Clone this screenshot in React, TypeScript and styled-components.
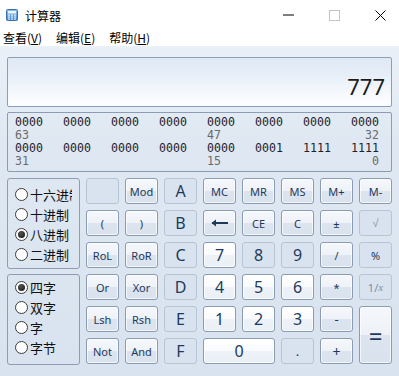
import React from 'react'
import styled, { createGlobalStyle, css } from 'styled-components'

const GlobalStyle = createGlobalStyle`
  html, body {
    margin: 0;
    padding: 0;
    background: #fff;
  }
  body {
    font-family: 'Noto Sans', 'Noto Sans CJK SC', sans-serif;
  }
`

const Window = styled.div`
  width: 399px;
  height: 376px;
  display: flex;
  flex-direction: column;
  overflow: hidden;
  background: #fff;
`

const TitleBar = styled.div`
  height: 30px;
  flex: none;
  display: flex;
  align-items: center;
  padding-left: 6px;
`

const Title = styled.span`
  margin-left: 7px;
  font-size: 12px;
  color: #000;
  font-family: 'Noto Sans CJK SC', sans-serif;
`

const Controls = styled.div`
  margin-left: auto;
  margin-right: -4px;
  display: flex;
  height: 100%;
`

const Ctrl = styled.div`
  width: 46px;
  display: flex;
  align-items: center;
  justify-content: center;
`

const MenuBar = styled.div`
  height: 16px;
  flex: none;
  display: flex;
  align-items: center;
  padding-left: 3px;
  font-family: 'Noto Sans CJK SC', sans-serif;
  font-size: 12px;
  color: #000;
  span {
    margin-right: 14px;
    line-height: 16px;
  }
`

const Body = styled.div`
  flex: 1;
  padding: 11px 7px 0;
  background: linear-gradient(#eaf0f8 0%, #dfe8f2 30%, #d8e3ef 100%);
`

const Display = styled.div`
  height: 50px;
  box-sizing: border-box;
  border: 1px solid #8d9db4;
  border-radius: 2px;
  background: linear-gradient(#dfe8f4 0%, #e7eef8 35%, #f6f9fd 75%, #fdfeff 100%);
  display: flex;
  align-items: flex-end;
  justify-content: flex-end;
  padding: 0 6px 9px 0;
  font-size: 22px;
  line-height: 22px;
  color: #1b1b1b;
`

const BitPanel = styled.div`
  margin-top: 5px;
  height: 60px;
  box-sizing: border-box;
  border: 1px solid #8c9cb2;
  border-radius: 2px;
  padding: 3px 0 0 7px;
  font-family: 'DejaVu Sans Mono', monospace;
  font-size: 11.6px;
`

const BitRow = styled.div<{ $label?: boolean }>`
  display: grid;
  grid-template-columns: repeat(8, 28px);
  column-gap: 20px;
  height: 13px;
  line-height: 13px;
  color: ${p => (p.$label ? '#6a6a6a' : '#1f2329')};
`

const BitLabel = styled.span<{ $col: number; $end?: boolean }>`
  grid-column: ${p => p.$col};
  justify-self: ${p => (p.$end ? 'end' : 'start')};
`

const Pad = styled.div`
  margin-top: 6px;
  display: grid;
  grid-template-columns: 73px repeat(8, 33px);
  grid-template-rows: repeat(6, 26px);
  gap: 6px;
`

const RadioGroup = styled.div<{ $pad: number; $row: number }>`
  grid-column: 1;
  grid-row: ${p => p.$row} / span 3;
  height: 91px;
  box-sizing: border-box;
  border: 1px solid #8e9db3;
  border-radius: 3px;
  padding: ${p => p.$pad}px 7px 0 7px;
  display: flex;
  flex-direction: column;
`

const RadioItem = styled.div`
  height: 20px;
  display: flex;
  align-items: center;
  font-family: 'Noto Sans CJK SC', sans-serif;
  font-size: 13px;
  color: #111;
  white-space: nowrap;
  overflow: hidden;
`

const Dot = styled.span<{ $on?: boolean }>`
  flex: none;
  width: 13px;
  height: 13px;
  box-sizing: border-box;
  border-radius: 50%;
  border: 1px solid #3c3c3c;
  background: #fff;
  margin-right: 2px;
  display: flex;
  align-items: center;
  justify-content: center;
  ${p =>
    p.$on &&
    css`
      &::after {
        content: '';
        width: 7px;
        height: 7px;
        border-radius: 50%;
        background: radial-gradient(circle at 40% 35%, #555, #111);
      }
    `}
`

type Kind = 'op' | 'num' | 'off'

const Key = styled.div<{ $kind: Kind; $size?: number; $wide?: boolean; $tall?: boolean; $dim?: boolean }>`
  box-sizing: border-box;
  border-radius: 3px;
  display: flex;
  align-items: center;
  justify-content: center;
  font-size: ${p => p.$size ?? 11}px;
  color: ${p => (p.$dim ? '#7d8da3' : '#1e395b')};
  user-select: none;
  ${p => p.$wide && 'grid-column: span 2;'}
  ${p => p.$tall && 'grid-row: span 2;'}
  ${p =>
    p.$kind === 'op'
      ? css`
          border: 1px solid #8a9bb3;
          background: linear-gradient(#f4f7fb 0%, #eef2f8 50%, #dbe4ef 50%, #d9e2ed 100%);
          box-shadow: inset 0 0 0 1px rgba(255, 255, 255, 0.7);
        `
      : p.$kind === 'num'
      ? css`
          border: 1px solid #8a9bb3;
          background: linear-gradient(#ffffff 0%, #f8fafd 50%, #edf2f8 50%, #eaf0f6 100%);
          box-shadow: inset 0 0 0 1px rgba(255, 255, 255, 0.8);
        `
      : css`
          border: 1px solid #b6c4d5;
          background: #d9e3ef;
        `}
`

const CalcIcon = () => (
  <svg width='12' height='12' viewBox='0 0 12 12'>
    <defs>
      <linearGradient id='ci' x1='0' y1='0' x2='0' y2='1'>
        <stop offset='0' stopColor='#8fc3ee' />
        <stop offset='1' stopColor='#3d86cf' />
      </linearGradient>
    </defs>
    <rect x='0.5' y='0.5' width='11' height='11' rx='1' fill='url(#ci)' stroke='#3b6fa8' />
    <rect x='2' y='2' width='8' height='2.5' fill='#eaf5ff' />
    {[0, 1, 2].map(r =>
      [0, 1, 2].map(c => (
        <rect key={`${r}${c}`} x={2 + c * 3} y={5.5 + r * 2} width='2' height='1.2' fill='#e3f0fb' />
      ))
    )}
  </svg>
)

const BackArrow = () => (
  <svg width='18' height='8' viewBox='0 0 18 8'>
    <path d='M1 4 H17' stroke='#1e395b' strokeWidth='2' />
    <path d='M0.5 4 L5 0.5 V7.5 Z' fill='#1e395b' />
  </svg>
)

type K = { t: React.ReactNode; k: Kind; s?: number; wide?: boolean; tall?: boolean; dim?: boolean }

const keys: K[] = [
  { t: '', k: 'off' },
  { t: 'Mod', k: 'op' },
  { t: 'A', k: 'off', s: 16 },
  { t: 'MC', k: 'op' },
  { t: 'MR', k: 'op' },
  { t: 'MS', k: 'op' },
  { t: 'M+', k: 'op' },
  { t: 'M-', k: 'op' },

  { t: '(', k: 'op' },
  { t: ')', k: 'op' },
  { t: 'B', k: 'off', s: 16 },
  { t: <BackArrow />, k: 'op' },
  { t: 'CE', k: 'op' },
  { t: 'C', k: 'op' },
  { t: '±', k: 'op' },
  { t: <span style={{ fontFamily: 'Liberation Sans, sans-serif' }}>√</span>, k: 'off', dim: true },

  { t: 'RoL', k: 'op' },
  { t: 'RoR', k: 'op' },
  { t: 'C', k: 'off', s: 16 },
  { t: '7', k: 'num', s: 16 },
  { t: '8', k: 'off', s: 16 },
  { t: '9', k: 'off', s: 16 },
  { t: '/', k: 'op' },
  { t: '%', k: 'off' },

  { t: 'Or', k: 'op' },
  { t: 'Xor', k: 'op' },
  { t: 'D', k: 'off', s: 16 },
  { t: '4', k: 'num', s: 16 },
  { t: '5', k: 'num', s: 16 },
  { t: '6', k: 'num', s: 16 },
  { t: '*', k: 'op' },
  { t: <>1/<i style={{ fontFamily: 'Liberation Serif, serif' }}>x</i></>, k: 'off', dim: true },

  { t: 'Lsh', k: 'op' },
  { t: 'Rsh', k: 'op' },
  { t: 'E', k: 'off', s: 16 },
  { t: '1', k: 'num', s: 16 },
  { t: '2', k: 'num', s: 16 },
  { t: '3', k: 'num', s: 16 },
  { t: '-', k: 'op', s: 13 },
  { t: '=', k: 'op', s: 24, tall: true },

  { t: 'Not', k: 'op' },
  { t: 'And', k: 'op' },
  { t: 'F', k: 'off', s: 16 },
  { t: '0', k: 'num', s: 16, wide: true },
  { t: '.', k: 'off', s: 13 },
  { t: '+', k: 'op', s: 14 },
]

const bitsTop = ['0000', '0000', '0000', '0000', '0000', '0000', '0000', '0000']
const bitsBottom = ['0000', '0000', '0000', '0000', '0000', '0001', '1111', '1111']

const App = () => {
  return (
    <Window>
      <GlobalStyle />
      <TitleBar>
        <CalcIcon />
        <Title>计算器</Title>
        <Controls>
          <Ctrl>
            <svg width='11' height='2'><rect width='11' height='1' y='0.5' fill='#000' /></svg>
          </Ctrl>
          <Ctrl>
            <svg width='11' height='11'><rect x='0.5' y='0.5' width='10' height='10' fill='none' stroke='#c4c4c4' /></svg>
          </Ctrl>
          <Ctrl>
            <svg width='11' height='11'><path d='M0.5 0.5 L10.5 10.5 M10.5 0.5 L0.5 10.5' stroke='#000' /></svg>
          </Ctrl>
        </Controls>
      </TitleBar>
      <MenuBar>
        <span>查看(<u>V</u>)</span>
        <span>编辑(<u>E</u>)</span>
        <span>帮助(<u>H</u>)</span>
      </MenuBar>
      <Body>
        <Display>777</Display>
        <BitPanel>
          <BitRow>
            {bitsTop.map((b, i) => (
              <span key={i}>{b}</span>
            ))}
          </BitRow>
          <BitRow $label>
            <BitLabel $col={1}>63</BitLabel>
            <BitLabel $col={5}>47</BitLabel>
            <BitLabel $col={8} $end>32</BitLabel>
          </BitRow>
          <BitRow>
            {bitsBottom.map((b, i) => (
              <span key={i}>{b}</span>
            ))}
          </BitRow>
          <BitRow $label>
            <BitLabel $col={1}>31</BitLabel>
            <BitLabel $col={5}>15</BitLabel>
            <BitLabel $col={8} $end>0</BitLabel>
          </BitRow>
        </BitPanel>
        <Pad>
          <RadioGroup $row={1} $pad={5}>
            <RadioItem><Dot />十六进制</RadioItem>
            <RadioItem><Dot />十进制</RadioItem>
            <RadioItem><Dot $on />八进制</RadioItem>
            <RadioItem><Dot />二进制</RadioItem>
          </RadioGroup>
          <RadioGroup $row={4} $pad={2}>
            <RadioItem><Dot $on />四字</RadioItem>
            <RadioItem><Dot />双字</RadioItem>
            <RadioItem><Dot />字</RadioItem>
            <RadioItem><Dot />字节</RadioItem>
          </RadioGroup>
          {keys.map((k, i) => (
            <Key key={i} $kind={k.k} $size={k.s} $wide={k.wide} $tall={k.tall} $dim={k.dim}>
              {k.t}
            </Key>
          ))}
        </Pad>
      </Body>
    </Window>
  )
}

export default App
